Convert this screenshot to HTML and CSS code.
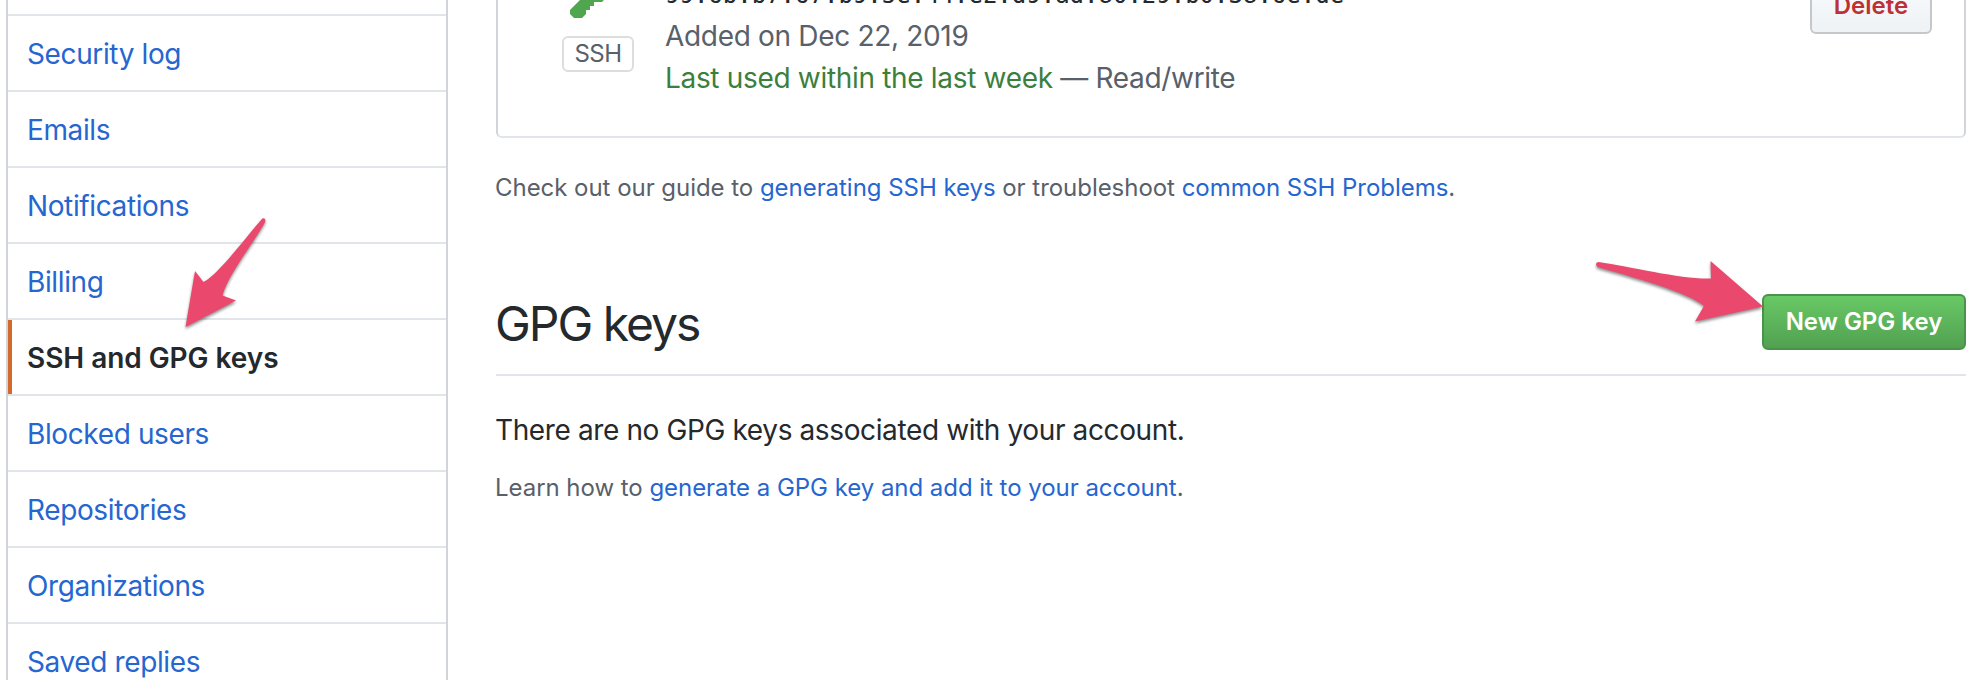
FILE: index.html
```html
<!DOCTYPE html>
<html lang="en">
<head>
<meta charset="utf-8">
<title>SSH and GPG keys</title>
<link rel="stylesheet" href="styles.css">
</head>
<body>
<div class="page">
  <nav class="menu">
    <a class="menu-item" href="#">Security log</a>
    <a class="menu-item" href="#">Emails</a>
    <a class="menu-item" href="#">Notifications</a>
    <a class="menu-item" href="#">Billing</a>
    <a class="menu-item selected" href="#">SSH and GPG keys</a>
    <a class="menu-item" href="#">Blocked users</a>
    <a class="menu-item" href="#">Repositories</a>
    <a class="menu-item" href="#">Organizations</a>
    <a class="menu-item" href="#">Saved replies</a>
  </nav>
  <main class="content">
    <section class="key-box">
      <div class="key-type">
        <svg class="key-icon" width="56" height="64" viewBox="0 0 14 16"><path fill="#4fa64f" d="M12.83 2.17C12.08 1.42 11.14 1.03 10 1c-1.13.03-2.08.42-2.83 1.17S6.04 3.86 6.01 5c0 .3.03.59.09.89L0 12v1l1 1h2l1-1v-1h1v-1h1v-1h2l1.09-1.11c.3.08.59.11.91.11 1.14-.03 2.08-.42 2.83-1.17S13.97 6.14 14 5c-.03-1.14-.42-2.08-1.17-2.83zM11 5.38c-.77 0-1.38-.61-1.38-1.38 0-.77.61-1.38 1.38-1.38.77 0 1.38.61 1.38 1.38 0 .77-.61 1.38-1.38 1.38z"/></svg>
        <span class="badge">SSH</span>
      </div>
      <div class="key-info">
        <code class="fingerprint">99:6b:b7:67:b9:5e:44:e2:d9:ad:80:29:b0:38:6e:de</code>
        <span class="added">Added on Dec 22, 2019</span>
        <span class="used"><span class="recent">Last used within the last week</span> — Read/write</span>
      </div>
      <button class="btn btn-danger">Delete</button>
    </section>
    <p class="note guide">Check out our guide to <a href="#">generating SSH keys</a> or troubleshoot <a href="#">common SSH Problems</a>.</p>
    <header class="subhead">
      <h2>GPG keys</h2>
      <button class="btn btn-primary">New GPG key</button>
    </header>
    <p class="empty">There are no GPG keys associated with your account.</p>
    <p class="note learn">Learn how to <a href="#">generate a GPG key and add it to your account</a>.</p>
  </main>
  <svg class="arrows" width="1984" height="680" viewBox="0 0 1984 680">
    <path d="M262.300 218.500Q265.500 217.500 265.500 221C258 237 228 274 222.500 295.500L236 300.500L185.500 327L195 271L203.500 282C218 275 247 236 262.300 218.500Z"/>
    <path d="M1598.500 262C1632 267 1685 280 1711 278.500L1710.500 261L1763 306.500L1695 321.500L1704 306C1688 292 1632 277 1597.500 267Q1594 263 1598.500 262Z"/>
  </svg>
</div>
</body>
</html>
```
FILE: styles.css
```css
* { box-sizing: border-box; }
body {
  margin: 0;
  background: #fff;
  color: #24292e;
  font: 28px/42px Inter, "Liberation Sans", sans-serif;
}
a { color: #2566d0; text-decoration: none; }
p, h2 { margin: 0; }
.page {
  position: relative;
  display: flex;
  width: 1984px;
  height: 680px;
  overflow: hidden;
}
.menu {
  display: flex;
  flex-direction: column;
  width: 442px;
  margin-left: 6px;
  padding-top: 14px;
  border: solid #d1d5da;
  border-width: 0 2px;
  flex-shrink: 0;
}
.menu-item {
  flex: 0 0 76px;
  border-top: 2px solid #e1e4e8;
  padding: 17px 19px 15px;
  white-space: nowrap;
  letter-spacing: -0.38px;
}
.menu-item.selected {
  color: #24292e;
  font-weight: 600;
  letter-spacing: -0.05px;
  background: linear-gradient(#d26a2e, #d26a2e) 0 0 / 4px 100% no-repeat;
}
.content {
  display: flex;
  flex-direction: column;
  width: 1470px;
  margin-left: 48px;
}
.key-box {
  display: flex;
  height: 138px;
  flex-shrink: 0;
  border: 2px solid #d1d5da;
  border-top: 0;
  border-bottom-color: #e1e4e8;
  border-radius: 0 0 6px 6px;
}
.key-type {
  display: flex;
  flex-direction: column;
  align-items: center;
  width: 72px;
  margin: -38px 0 0 64px;
}
.key-icon { flex-shrink: 0; }
.badge {
  width: 72px;
  height: 36px;
  margin-top: 10px;
  border: 2px solid #ddd;
  border-radius: 6px;
  color: #586069;
  font-size: 24px;
  line-height: 32px;
  text-align: center;
  letter-spacing: -0.5px;
}
.key-info {
  display: flex;
  flex-direction: column;
  margin: -26px 0 0 31px;
  color: #586069;
  white-space: nowrap;
  letter-spacing: -0.32px;
}
.fingerprint {
  color: #24292e;
  font: 24px/43px "DejaVu Sans Mono", monospace;
  letter-spacing: 0;
  height: 41px;
}
.recent { color: #3c7f3c; }
.btn {
  flex-shrink: 0;
  padding: 0;
  border: 2px solid;
  border-radius: 6px;
  font: 600 24px/40px Inter, "Liberation Sans", sans-serif;
}
.btn-danger {
  width: 122px;
  height: 56px;
  margin: -22px 32px 0 auto;
  color: #bd3135;
  background: linear-gradient(#fafbfc, #eff3f6 90%);
  border-color: #c5c8cb;
}
.note {
  margin-left: -1px;
  font-size: 24px;
  line-height: 36px;
  color: #586069;
  white-space: nowrap;
  letter-spacing: -0.04px;
}
.guide { margin-top: 32px; }
.subhead {
  display: flex;
  align-items: flex-end;
  justify-content: space-between;
  height: 170px;
  padding-bottom: 24px;
  border-bottom: 2px solid #e1e4e8;
}
.subhead h2 {
  margin-left: -1px;
  font-size: 48px;
  line-height: 52px;
  font-weight: 400;
  letter-spacing: -2px;
}
.btn-primary {
  width: 204px;
  height: 56px;
  color: #fff;
  border-color: #4a934a;
  background: linear-gradient(#69ca66, #519f50) border-box;
}
.empty {
  margin: 33px 0 0 -1px;
  white-space: nowrap;
  letter-spacing: -0.38px;
}
.learn { margin-top: 19px; }
.arrows {
  position: absolute;
  left: 0;
  top: 0;
  fill: #eb486d;
  filter: drop-shadow(0 2px 1.500px rgba(0, 0, 0, .45));
  pointer-events: none;
}
```
